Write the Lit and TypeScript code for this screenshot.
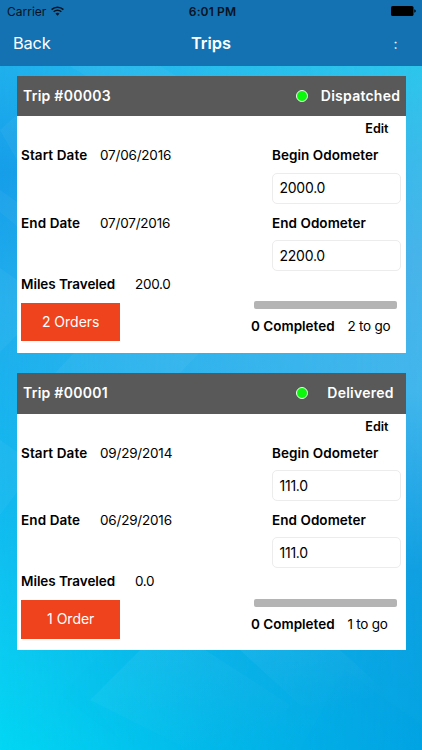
import { LitElement, html, css } from "lit";
import { customElement, property } from "lit/decorators.js";

interface Trip {
  id: string;
  status: string;
  start: string;
  end: string;
  begin: string;
  finish: string;
  miles: string;
  orders: string;
  done: string;
  left: string;
}

const TRIPS: Trip[] = [
  { id: "00003", status: "Dispatched", start: "07/06/2016", end: "07/07/2016", begin: "2000.0", finish: "2200.0", miles: "200.0", orders: "2 Orders", done: "0 Completed", left: "2 to go" },
  { id: "00001", status: "Delivered", start: "09/29/2014", end: "06/29/2016", begin: "111.0", finish: "111.0", miles: "0.0", orders: "1 Order", done: "0 Completed", left: "1 to go" },
];

@customElement("trip-card")
export class TripCard extends LitElement {
  @property({ attribute: false }) trip!: Trip;

  static styles = css`
    :host { display: block; height: 276.6px; background: #fff; color: #000; font-size: 13.5px; line-height: 18px; white-space: nowrap; }
    .head { display: flex; align-items: center; height: 40.4px; background: #595959; color: #fff; font-size: 14px; font-weight: 600; box-sizing: border-box; padding-left: 6.5px; }
    .name { flex: 1; letter-spacing: 0.26px; }
    .dot { width: 10px; height: 10px; border-radius: 50%; background: #0bf70b; border: 1px solid #e9ffe9; }
    .status { width: 90px; margin-left: 8px; text-align: center; letter-spacing: 0.24px; }
    .body { display: flex; justify-content: space-between; }
    .left { padding: 30px 0 0 4.5px; }
    .right { width: 156px; padding-top: 4px; }
    .pair { display: grid; grid-template-columns: 79px auto; height: 67.2px; }
    .miles { grid-template-columns: 114px auto; height: 38px; margin-top: -6px; }
    .label { font-weight: 600; letter-spacing: 0.05px; }
    .left .label { letter-spacing: 0.1px; }
    .miles .label { letter-spacing: -0.05px; }
    .value { letter-spacing: -0.2px; }
    .miles .value { letter-spacing: -0.3px; }
    .orders { display: flex; align-items: center; justify-content: center; width: 99.4px; height: 38.5px; margin-top: -10px; background: #ee431d; color: #fff; font-size: 14px; }
    .edit { font-size: 12.6px; font-weight: 600; text-align: right; padding-right: 17px; height: 26px; }
    .field { padding-left: 22.5px; height: 67.2px; }
    .box { box-sizing: border-box; width: 129px; height: 31px; margin-top: 8.5px; border: 1px solid #ececec; border-radius: 5px; padding: 5.5px 6.5px; font-size: 14px; letter-spacing: -0.25px; }
    .bar { width: 143px; height: 8px; margin: 20.7px 0 8px 4.5px; border-radius: 2px; background: #b4b4b4; }
    .progress { display: grid; grid-template-columns: 96.5px auto; padding-left: 1.5px; }
    .progress .label { letter-spacing: 0; }
    .progress .value { letter-spacing: -0.25px; }
  `;

  render() {
    const t = this.trip;
    return html`
      <div class="head"><span class="name">Trip #${t.id}</span><span class="dot"></span><span class="status">${t.status}</span></div>
      <div class="body">
        <div class="left">
          <div class="pair"><span class="label">Start Date</span><span class="value">${t.start}</span></div>
          <div class="pair"><span class="label">End Date</span><span class="value">${t.end}</span></div>
          <div class="pair miles"><span class="label">Miles Traveled</span><span class="value">${t.miles}</span></div>
          <div class="orders">${t.orders}</div>
        </div>
        <div class="right">
          <div class="edit">Edit</div>
          <div class="field"><div class="label">Begin Odometer</div><div class="box">${t.begin}</div></div>
          <div class="field"><div class="label">End Odometer</div><div class="box">${t.finish}</div></div>
          <div class="bar"></div>
          <div class="progress"><span class="label">${t.done}</span><span class="value">${t.left}</span></div>
        </div>
      </div>`;
  }
}

@customElement("app-root")
export class AppRoot extends LitElement {
  static styles = css`
    :host { display: block; position: relative; isolation: isolate; height: 750px; overflow: hidden; font-family: Inter, "Liberation Sans", sans-serif; }
    .backdrop { position: absolute; inset: 0; z-index: -1; }
    .top { height: 66px; background: #1572b2; }
    .statusbar { display: grid; grid-template-columns: 1fr auto 1fr; align-items: center; height: 22px; padding: 0 6px 0 7px; color: #06131e; font-size: 12px; }
    .carrier { display: flex; align-items: center; gap: 5px; }
    .clock { font-weight: 600; letter-spacing: 0.15px; padding-left: 2px; }
    .battery { justify-self: end; }
    .nav { display: grid; grid-template-columns: 1fr auto 1fr; align-items: center; height: 42px; padding: 0 13px; color: #fff; font-size: 16.4px; line-height: 20px; }
    .back { letter-spacing: -0.2px; }
    .title { font-weight: 600; }
    .more { justify-self: end; margin-right: 11.5px; font-size: 14px; padding-top: 1px; }
    .list { display: flex; flex-direction: column; gap: 20.7px; padding: 10px 16.5px 0; }
    svg { display: block; }
  `;

  render() {
    return html`
      <svg class="backdrop" width="422" height="750" viewBox="0 0 422 750">
        <defs>
          <linearGradient id="west" x1="0" y1="0" x2="0" y2="1">
            <stop offset=".09" stop-color="#1fb0ed"/><stop offset=".23" stop-color="#169ee9"/><stop offset=".4" stop-color="#20aeed"/>
            <stop offset=".5" stop-color="#1bb2ee"/><stop offset=".67" stop-color="#12b9ef"/><stop offset=".85" stop-color="#0ccaf1"/><stop offset="1" stop-color="#02d7f4"/>
          </linearGradient>
          <linearGradient id="east" x1="0" y1="0" x2="0" y2="1">
            <stop offset=".09" stop-color="#2dc5eb"/><stop offset=".2" stop-color="#3abbea"/><stop offset=".35" stop-color="#48b3e9"/>
            <stop offset=".52" stop-color="#42b6ec"/><stop offset=".64" stop-color="#2aa9e7"/><stop offset=".76" stop-color="#109fe1"/><stop offset="1" stop-color="#02a4e2"/>
          </linearGradient>
          <linearGradient id="fade"><stop offset="0" stop-color="#000"/><stop offset=".5" stop-color="#999"/><stop offset="1" stop-color="#fff"/></linearGradient>
          <linearGradient id="facet" x1="0" y1="0" x2=".7" y2="1"><stop offset="0" stop-color="#fff" stop-opacity=".05"/><stop offset="1" stop-color="#fff" stop-opacity="0"/></linearGradient>
          <mask id="blend"><rect width="422" height="750" fill="url(#fade)"/></mask>
        </defs>
        <rect width="422" height="750" fill="url(#west)"/>
        <rect width="422" height="750" fill="url(#east)" mask="url(#blend)"/>
        <g fill="#fff" fill-opacity=".04">
          <path d="M70 66H160L176 76H86zM0 130L17 115V160zM0 190L17 202V226L0 212zM0 268L17 280V335L0 352zM55 373L75 352H200L180 373zM0 440L17 452V492L0 515z"/>
        </g>
        <path d="M140 650H205L290 705L260 750H190L90 700z" fill="url(#facet)"/>
        <path d="M240 650H340L400 705H300z" fill="url(#facet)"/>
        <path d="M105 650H140L90 700L120 740L60 695z" fill="#00a8e8" fill-opacity=".04"/>
        <path d="M345 670L422 725V750H300z" fill="#0090e0" fill-opacity=".04"/>
      </svg>
      <div class="top">
        <div class="statusbar">
          <div class="carrier"><span>Carrier</span>
            <svg width="13" height="10" viewBox="0 0 13 10" fill="none" stroke="#06131e" stroke-width="1.6">
              <path d="M.6 3.6a8.4 8.4 0 0 1 11.8 0M2.7 5.8a5.4 5.4 0 0 1 7.6 0"/>
              <path d="M4.5 7.6a2.9 2.9 0 0 1 4 0L6.5 9.7z" fill="#06131e" stroke="none"/>
            </svg>
          </div>
          <span class="clock">6:01 PM</span>
          <svg class="battery" width="25" height="10" viewBox="0 0 25 10"><rect width="22.5" height="10" rx="1.6"/><path d="M23.3 3.2q1.5.5 1.5 1.8t-1.5 1.8z"/></svg>
        </div>
        <div class="nav"><span class="back">Back</span><span class="title">Trips</span><span class="more">:</span></div>
      </div>
      <div class="list">${TRIPS.map((t) => html`<trip-card .trip=${t}></trip-card>`)}</div>`;
  }
}
